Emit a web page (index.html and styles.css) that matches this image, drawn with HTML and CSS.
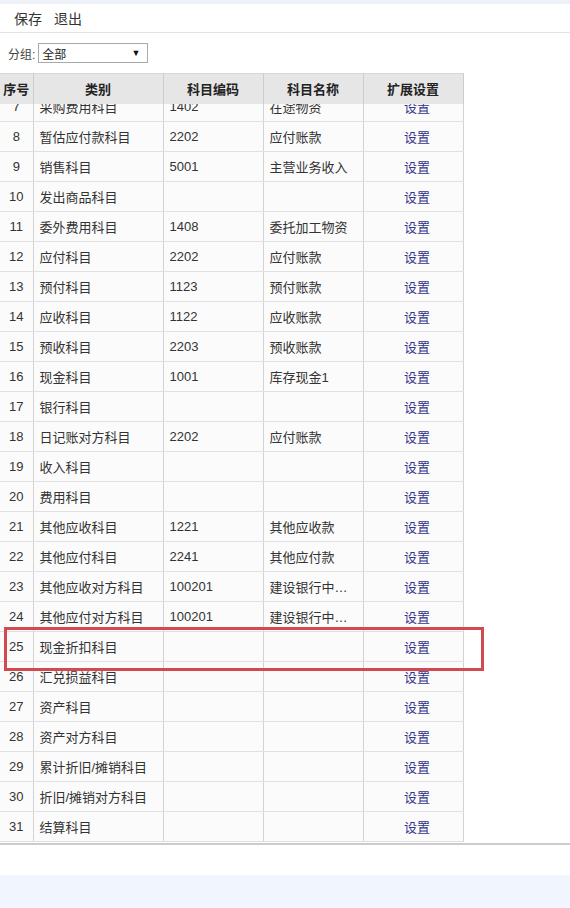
FILE: index.html
```html
<!DOCTYPE html>
<html lang="zh-CN">
<head>
<meta charset="utf-8">
<title>科目设置</title>
<link rel="stylesheet" href="styles.css">
</head>
<body>
<div class="topstrip"></div>
<div class="toolbar">
  <a class="tool">保存</a>
  <a class="tool">退出</a>
</div>
<div class="filter">
  <span class="filter-label">分组:</span>
  <div class="select"><span>全部</span><span class="arrow">▼</span></div>
</div>
<div class="grid">
  <table class="head">
    <colgroup><col class="c1"><col class="c2"><col class="c3"><col class="c4"><col class="c5"></colgroup>
    <tr><th>序号</th><th>类别</th><th>科目编码</th><th>科目名称</th><th>扩展设置</th></tr>
  </table>
  <div class="body-view">
    <table class="body">
      <colgroup><col class="c1"><col class="c2"><col class="c3"><col class="c4"><col class="c5"></colgroup>
      <tr><td class="n">7</td><td>采购费用科目</td><td>1402</td><td>在途物资</td><td class="s"><a>设置</a></td></tr>
      <tr><td class="n">8</td><td>暂估应付款科目</td><td>2202</td><td>应付账款</td><td class="s"><a>设置</a></td></tr>
      <tr><td class="n">9</td><td>销售科目</td><td>5001</td><td>主营业务收入</td><td class="s"><a>设置</a></td></tr>
      <tr><td class="n">10</td><td>发出商品科目</td><td></td><td></td><td class="s"><a>设置</a></td></tr>
      <tr><td class="n">11</td><td>委外费用科目</td><td>1408</td><td>委托加工物资</td><td class="s"><a>设置</a></td></tr>
      <tr><td class="n">12</td><td>应付科目</td><td>2202</td><td>应付账款</td><td class="s"><a>设置</a></td></tr>
      <tr><td class="n">13</td><td>预付科目</td><td>1123</td><td>预付账款</td><td class="s"><a>设置</a></td></tr>
      <tr><td class="n">14</td><td>应收科目</td><td>1122</td><td>应收账款</td><td class="s"><a>设置</a></td></tr>
      <tr><td class="n">15</td><td>预收科目</td><td>2203</td><td>预收账款</td><td class="s"><a>设置</a></td></tr>
      <tr><td class="n">16</td><td>现金科目</td><td>1001</td><td>库存现金1</td><td class="s"><a>设置</a></td></tr>
      <tr><td class="n">17</td><td>银行科目</td><td></td><td></td><td class="s"><a>设置</a></td></tr>
      <tr><td class="n">18</td><td>日记账对方科目</td><td>2202</td><td>应付账款</td><td class="s"><a>设置</a></td></tr>
      <tr><td class="n">19</td><td>收入科目</td><td></td><td></td><td class="s"><a>设置</a></td></tr>
      <tr><td class="n">20</td><td>费用科目</td><td></td><td></td><td class="s"><a>设置</a></td></tr>
      <tr><td class="n">21</td><td>其他应收科目</td><td>1221</td><td>其他应收款</td><td class="s"><a>设置</a></td></tr>
      <tr><td class="n">22</td><td>其他应付科目</td><td>2241</td><td>其他应付款</td><td class="s"><a>设置</a></td></tr>
      <tr><td class="n">23</td><td>其他应收对方科目</td><td>100201</td><td>建设银行中…</td><td class="s"><a>设置</a></td></tr>
      <tr><td class="n">24</td><td>其他应付对方科目</td><td>100201</td><td>建设银行中…</td><td class="s"><a>设置</a></td></tr>
      <tr><td class="n">25</td><td>现金折扣科目</td><td></td><td></td><td class="s"><a>设置</a></td></tr>
      <tr><td class="n">26</td><td>汇兑损益科目</td><td></td><td></td><td class="s"><a>设置</a></td></tr>
      <tr><td class="n">27</td><td>资产科目</td><td></td><td></td><td class="s"><a>设置</a></td></tr>
      <tr><td class="n">28</td><td>资产对方科目</td><td></td><td></td><td class="s"><a>设置</a></td></tr>
      <tr><td class="n">29</td><td>累计折旧/摊销科目</td><td></td><td></td><td class="s"><a>设置</a></td></tr>
      <tr><td class="n">30</td><td>折旧/摊销对方科目</td><td></td><td></td><td class="s"><a>设置</a></td></tr>
      <tr><td class="n">31</td><td>结算科目</td><td></td><td></td><td class="s"><a>设置</a></td></tr>
    </table>
  </div>
</div>
<div class="spacer"></div>
<div class="footer"></div>
<div class="highlight"></div>
</body>
</html>
```
FILE: styles.css
```css
html, body {
  margin: 0;
  padding: 0;
  background: #ffffff;
  font-family: "Liberation Sans", "Noto Sans CJK SC", sans-serif;
  font-size: 13px;
  color: #333333;
}
body {
  position: relative;
  width: 570px;
  height: 908px;
  overflow: hidden;
}
.topstrip {
  height: 4px;
  background: #eef1f7;
}
.toolbar {
  height: 29px;
  border-bottom: 1px solid #e2e2e2;
  display: flex;
  align-items: center;
  padding-left: 14px;
  gap: 12px;
  box-sizing: border-box;
}
.tool {
  font-size: 14px;
  color: #333333;
  cursor: pointer;
}
.filter {
  height: 40px;
  display: flex;
  align-items: center;
  padding-left: 8px;
  gap: 3px;
  box-sizing: border-box;
}
.filter-label {
  font-size: 12px;
  color: #444444;
}
.select {
  width: 110px;
  height: 20px;
  box-sizing: border-box;
  border: 1px solid #a9a9a9;
  display: flex;
  align-items: center;
  justify-content: space-between;
  padding: 0 7px 0 3px;
  font-size: 12px;
  color: #222222;
  background: #ffffff;
}
.arrow {
  font-size: 9px;
  color: #111111;
}
.grid {
  border-bottom: 2px solid #cccccc;
}
table {
  border-collapse: collapse;
  table-layout: fixed;
  width: 463px;
}
.c1 { width: 33px; }
.c2 { width: 130px; }
.c3 { width: 100px; }
.c4 { width: 100px; }
.c5 { width: 100px; }
.head th {
  height: 30px;
  padding: 0;
  background: #e6e6e6;
  border-right: 1px solid #cccccc;
  border-top: 1px solid #d6d6d6;
  font-weight: bold;
  font-size: 13px;
  color: #222222;
  text-align: center;
  box-sizing: border-box;
}
.body-view {
  height: 739px;
  overflow: hidden;
}
.body {
  margin-top: -12px;
}
.body td {
  height: 30px;
  padding: 0 6px;
  box-sizing: border-box;
  border-right: 1px solid #d2d2d2;
  border-bottom: 1px solid #e0e0e0;
  background: #fbfbfb;
  color: #333333;
  white-space: nowrap;
  overflow: hidden;
  font-size: 13px;
}
.body td.n {
  text-align: center;
  padding: 0;
}
.body td.s {
  text-align: center;
  padding: 0 0 0 8px;
}
.body td.s a {
  color: #34348a;
  cursor: pointer;
}
.spacer {
  height: 30px;
}
.footer {
  height: 33px;
  background: #f1f5fd;
}
.highlight {
  position: absolute;
  left: 4px;
  top: 627px;
  width: 480px;
  height: 44px;
  box-sizing: border-box;
  border: 3px solid #d24a4f;
  pointer-events: none;
}
```
